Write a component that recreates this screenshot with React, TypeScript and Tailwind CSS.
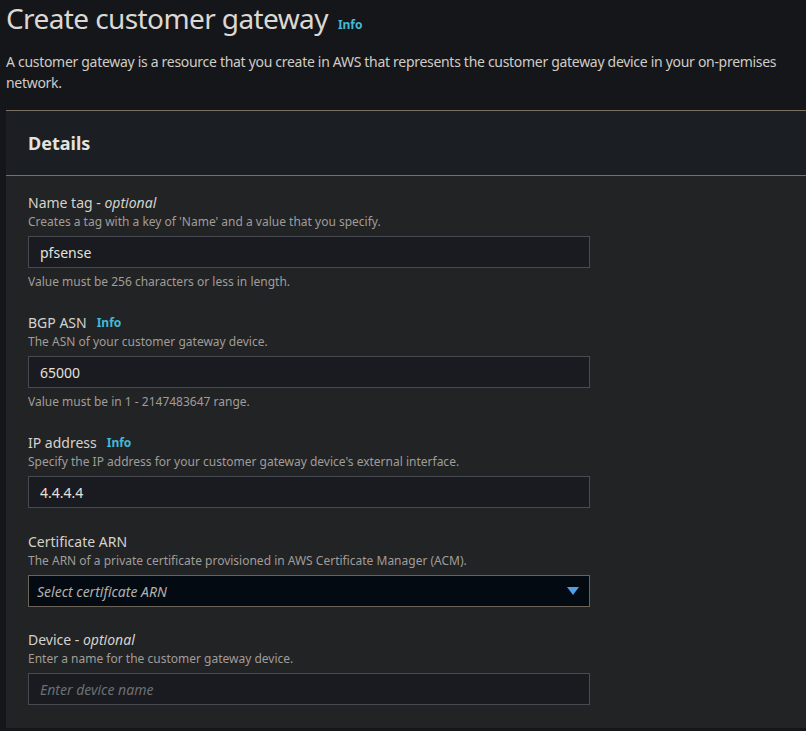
import React from "react";

function InfoLink() {
  return <span className="ml-[10px] text-[12px] font-bold text-[#44b9d6]">Info</span>;
}

type FieldProps = {
  label: React.ReactNode;
  hint: string;
  constraint?: string;
  className?: string;
  children: React.ReactNode;
};

function Field({ label, hint, constraint, className, children }: FieldProps) {
  return (
    <div className={"flex flex-col " + (className ?? "")}>
      <div className="flex items-center text-[14px] leading-[20px] text-[#d5d2cc]">{label}</div>
      <div className="text-[12px] leading-[18px] text-[#a09d99]">{hint}</div>
      <div className="mt-[5px]">{children}</div>
      {constraint && (
        <div className="mt-[5px] text-[12px] leading-[18px] text-[#a09d99]">{constraint}</div>
      )}
    </div>
  );
}

function TextBox({ value, placeholder }: { value?: string; placeholder?: string }) {
  return (
    <div className="flex h-[32px] w-[562px] items-center border border-[#474b51] bg-[#191b20] px-[11px] text-[14px]">
      {value ? (
        <span className="text-[#e3e1dd]">{value}</span>
      ) : (
        <span className="italic text-[#6c6f73]">{placeholder}</span>
      )}
    </div>
  );
}

export default function App() {
  return (
    <div
      className="min-h-[731px] w-full overflow-hidden bg-[#15161a] pl-[6px]"
      style={{ fontFamily: '"Noto Sans", "Open Sans", sans-serif' }}
    >
      {/* Page header */}
      <div className="flex items-baseline">
        <h1 className="text-[28px] leading-[37px] tracking-[-0.6px] text-[#dcd8d2]">Create customer gateway</h1>
        <InfoLink />
      </div>
      <p className="mt-[14px] text-[14px] leading-[21px] tracking-[-0.3px] text-[#d0ccc6]">
        A customer gateway is a resource that you create in AWS that represents the customer gateway device in your
        on&#8209;premises network.
      </p>

      {/* Details panel */}
      <div className="mt-[17px] border-t border-[#7a7063]">
        <div className="flex h-[65px] items-center border-b border-[#7a7063] bg-[#1b1e22] px-[22px]">
          <h2 className="text-[18px] font-bold text-[#e6e3dd]">Details</h2>
        </div>
        <div className="flex flex-col bg-[#222325] px-[22px] pb-[23px] pt-[17px]">
          <Field
            label={
              <>
                Name tag -&nbsp;<i>optional</i>
              </>
            }
            hint="Creates a tag with a key of 'Name' and a value that you specify."
            constraint="Value must be 256 characters or less in length."
          >
            <TextBox value="pfsense" />
          </Field>

          <Field
            className="mt-[22px]"
            label={
              <>
                BGP ASN
                <InfoLink />
              </>
            }
            hint="The ASN of your customer gateway device."
            constraint="Value must be in 1 - 2147483647 range."
          >
            <TextBox value="65000" />
          </Field>

          <Field
            className="mt-[22px]"
            label={
              <>
                IP address
                <InfoLink />
              </>
            }
            hint="Specify the IP address for your customer gateway device's external interface."
          >
            <TextBox value="4.4.4.4" />
          </Field>

          <Field
            className="mt-[24px]"
            label="Certificate ARN"
            hint="The ARN of a private certificate provisioned in AWS Certificate Manager (ACM)."
          >
            <div className="flex h-[32px] w-[562px] items-center justify-between border border-[#6b6357] bg-[#030a12] pl-[8px] pr-[10px] text-[14px]">
              <span className="italic text-[#b3afa9]">Select certificate ARN</span>
              <svg width="12" height="9" viewBox="0 0 12 9">
                <path d="M0 0 H12 L6 8 Z" fill="#539fe5" />
              </svg>
            </div>
          </Field>

          <Field
            className="mt-[23px]"
            label={
              <>
                Device -&nbsp;<i>optional</i>
              </>
            }
            hint="Enter a name for the customer gateway device."
          >
            <TextBox placeholder="Enter device name" />
          </Field>
        </div>
      </div>
    </div>
  );
}
